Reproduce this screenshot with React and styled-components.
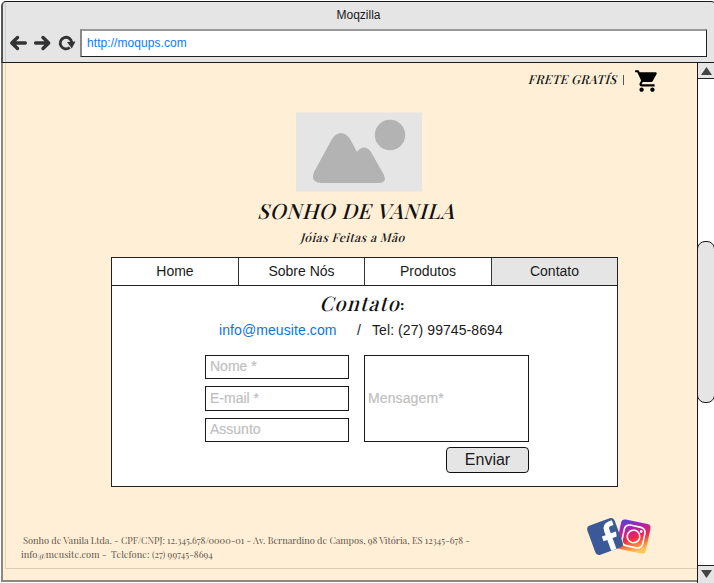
import React from "react";
import styled, { createGlobalStyle } from "styled-components";

const GlobalStyle = createGlobalStyle`
  * { box-sizing: border-box; }
  body { margin: 0; background: #fff; overflow: hidden; }
`;

const sans = `"Liberation Sans", Arial, sans-serif`;
const serif = `"Playfair Display", "Liberation Serif", serif`;

const Window = styled.div`
  position: relative;
  width: 714px;
  height: 583px;
  padding: 1px 0 0 1px;
  display: flex;
  flex-direction: column;
  overflow: hidden;
  font-family: ${sans};
  color: #1a1a1a;
`;

const Chrome = styled.header`
  height: 62px;
  flex: none;
  width: 715px;
  background: #e5e5e5;
  border: 1px solid #1a1a1a;
  border-left: 2px solid #555;
  border-radius: 5px 5px 0 0;
`;

const WindowTitle = styled.div`
  height: 27px;
  line-height: 26px;
  text-align: center;
  padding-right: 1px;
  font-size: 12px;
`;

const Toolbar = styled.div`
  display: flex;
  align-items: center;
  height: 28px;
  padding-left: 6px;
`;

const ToolIcon = styled.svg`
  width: 18px;
  height: 18px;
  margin-right: 6px;
  flex: none;
  overflow: visible;
`;

const Address = styled.div`
  width: 627px;
  height: 28px;
  flex: none;
  margin-left: -1px;
  padding-left: 5px;
  line-height: 25px;
  background: #fff;
  border: 1px solid #222;
  border-top: 2px solid #999;
  border-left: 2px solid #888;
  color: #0a7cff;
  font-size: 12px;
  letter-spacing: 0.06px;
`;

const Body = styled.div`
  display: flex;
  height: 520px;
`;

const Page = styled.main`
  width: 696px;
  flex: none;
  height: 519px;
  background: #ffefd7;
  border-left: 2px solid #8c8780;
  border-bottom: 2px solid #8c8780;
  display: flex;
  flex-direction: column;
`;

const InnerEdge = styled.div`
  position: absolute;
  left: 5px;
  top: 3px;
  width: 692px;
  height: 566px;
  border-left: 1px solid rgba(90, 70, 40, 0.16);
  border-bottom: 1px solid rgba(90, 70, 40, 0.2);
  pointer-events: none;
`;

const TopStrip = styled.div`
  display: flex;
  height: 49px;
  padding: 5px 0 0 523px;
`;

const Display = styled.span`
  font-family: ${serif};
  white-space: nowrap;
  color: #111;
  font-weight: ${(p) => p.$weight};
  font-size: ${(p) => p.$size}px;
  line-height: ${(p) => p.$line}px;
  letter-spacing: ${(p) => p.$track}px;
  transform: skewX(-16deg);
`;

const Divider = styled.span`
  width: 1px;
  height: 10px;
  margin: 7px 9px 0 8px;
  background: #555;
`;

const CartIcon = styled.svg`
  width: 26px;
  height: 26px;
  margin-left: 1px;
`;

const Hero = styled.section`
  display: flex;
  flex-direction: column;
  height: 145px;
  padding-left: 293px;
`;

const Placeholder = styled.svg`
  width: 126px;
  height: 80px;
  flex: none;
`;

const BrandLine = styled.div`
  display: flex;
  height: ${(p) => p.$height}px;
  margin-left: ${(p) => p.$shift}px;
`;

const Panel = styled.section`
  width: 507px;
  height: 230px;
  flex: none;
  margin-left: 108px;
  background: #fff;
  border: 1px solid #222;
`;

const Nav = styled.nav`
  display: grid;
  grid-template-columns: 127px 126px 127px 125px;
  height: 28px;
  border-bottom: 1px solid #222;
`;

const NavItem = styled.a`
  text-align: center;
  font-size: 14px;
  line-height: 26px;
  border-right: ${(p) => (p.$active ? "none" : "1px solid #333")};
  background: ${(p) => (p.$active ? "#e5e5e5" : "#fff")};
`;

const Heading = styled.h1`
  margin: 0;
  height: 34px;
  padding: 3px 0 0 209px;
  display: flex;
  font-weight: normal;
`;

const Colon = styled.span`
  margin-left: -2px;
  font: 700 15px/32px "Liberation Serif", serif;
`;

const ContactLine = styled.div`
  display: flex;
  height: 35px;
  padding-left: 107px;
  font-size: 14px;
  line-height: 21px;
  white-space: nowrap;
`;

const Mail = styled.a`
  width: 138px;
  color: #0a74e6;
  letter-spacing: 0.09px;
`;

const Slash = styled.span`
  width: 15px;
`;

const Phone = styled.span`
  letter-spacing: 0.08px;
`;

const Form = styled.form`
  display: grid;
  grid-template-columns: 144px 165px;
  column-gap: 15px;
  padding-left: 93px;
`;

const Fields = styled.div`
  display: flex;
  flex-direction: column;
  gap: 7px;
`;

const Field = styled.div`
  height: ${(p) => p.$height}px;
  border: 1px solid #1a1a1a;
  padding-left: 4px;
  display: flex;
  align-items: center;
  padding-bottom: 2px;
  color: #c0c0c0;
  font-size: 14px;
  -webkit-text-stroke: 0.2px currentColor;
`;

const MessageColumn = styled.div`
  display: flex;
  flex-direction: column;
  align-items: flex-end;
  gap: 5px;
`;

const Message = styled(Field)`
  width: 165px;
  padding-left: 3px;
  letter-spacing: 0.12px;
`;

const Send = styled.button`
  width: 83px;
  height: 26px;
  padding: 0 0 1px;
  border: 1px solid #111;
  border-radius: 4px;
  background: #e5e5e5;
  color: #1a1a1a;
  font: 16px ${sans};
`;

const Footer = styled.footer`
  display: flex;
  padding: 29px 0 0 18px;
`;

const Legal = styled.div`
  width: 565px;
  padding-top: 17px;
  display: flex;
  flex-direction: column;
`;

const LegalLine = styled.span`
  font-family: ${serif};
  font-size: 9.300px;
  line-height: 14px;
  white-space: pre;
  color: #5f5548;
  letter-spacing: ${(p) => p.$track}px;
  margin-left: ${(p) => p.$indent}px;
`;

const Social = styled.svg`
  width: 68px;
  height: 42px;
`;

const Scrollbar = styled.aside`
  width: 20px;
  flex: none;
  height: 520px;
  background: #fff;
  border-left: 1px solid #1a1a1a;
  display: flex;
  flex-direction: column;
`;

const ScrollButton = styled.div`
  height: ${(p) => (p.$down ? 18 : 16)}px;
  flex: none;
  background: #e5e5e5;
  border-bottom: ${(p) => (p.$down ? "none" : "1px solid #222")};
  border-top: ${(p) => (p.$down ? "1px solid #222" : "none")};
`;

const Arrow = styled.svg`
  display: block;
  width: 17px;
  height: 16px;
`;

const Thumb = styled.div`
  width: 18px;
  height: 162px;
  flex: none;
  margin: 162px 0 auto -1px;
  border: 1px solid #1a1a1a;
  border-radius: 8px;
  background: #e5e5e5;
`;

export default function App() {
  return (
    <>
      <GlobalStyle />
      <Window>
        <Chrome>
          <WindowTitle>Moqzilla</WindowTitle>
          <Toolbar>
            <ToolIcon viewBox="0 0 18 18" fill="none" stroke="#333" strokeWidth="3.400" strokeLinecap="round" strokeLinejoin="round">
              <path d="M16.300 9H3M8.500 3.500L2.800 9l5.700 5.500" />
            </ToolIcon>
            <ToolIcon viewBox="0 0 18 18" fill="none" stroke="#333" strokeWidth="3.400" strokeLinecap="round" strokeLinejoin="round">
              <path d="M2.600 9h13M10 3.500l5.700 5.500-5.700 5.500" />
            </ToolIcon>
            <ToolIcon viewBox="0 0 18 18" fill="none" stroke="#333" strokeWidth="2.800">
              <path d="M12.800 13.500A5.800 5.800 0 1 1 14.800 8.500" />
              <path d="M10 8l8.500-.5-3.700 7z" fill="#333" stroke="none" />
            </ToolIcon>
            <Address>http://moqups.com</Address>
          </Toolbar>
        </Chrome>
        <Body>
          <Page>
            <TopStrip>
              <Display $size={12.4} $line={23} $track={0.3} $weight={500}>FRETE GRATÍS</Display>
              <Divider />
              <CartIcon viewBox="0 0 24 24">
                <path d="M7 18c-1.100 0-1.990.9-1.990 2S5.900 22 7 22s2-.9 2-2-.9-2-2-2zM1 2v2h2l3.600 7.590-1.350 2.450c-.16.28-.25.61-.25.960 0 1.100.9 2 2 2h12v-2H7.420c-.14 0-.25-.11-.25-.25l.03-.12.9-1.630h7.450c.75 0 1.410-.41 1.750-1.030l3.580-6.490A1 1 0 0 0 20 4H5.210l-.94-2H1zm16 16c-1.100 0-1.990.9-1.990 2s.89 2 1.990 2 2-.9 2-2-.9-2-2-2z" />
              </CartIcon>
            </TopStrip>
            <Hero>
              <Placeholder viewBox="0 0 126 80">
                <path d="M0 .5h126v79H0z" fill="#e5e5e5" />
                <path d="M18 60L36 27c5-8 13-8 18 0l7 13c4-6 10-6 14 0l13 23q3 8-5 8H25q-11-1-7-11z" fill="#b3b3b3" />
                <circle cx="94" cy="23" r="15.200" fill="#b3b3b3" />
              </Placeholder>
              <BrandLine $height={33} $shift={-36}>
                <Display $size={21} $line={36} $track={0.8} $weight={500}>SONHO DE VANILA</Display>
              </BrandLine>
              <BrandLine $height={20} $shift={6}>
                <Display $size={12} $line={25} $track={0.5} $weight={500}>Jóias Feitas a Mão</Display>
              </BrandLine>
            </Hero>
            <Panel>
              <Nav>
                <NavItem>Home</NavItem>
                <NavItem>Sobre Nós</NavItem>
                <NavItem>Produtos</NavItem>
                <NavItem $active>Contato</NavItem>
              </Nav>
              <Heading>
                <Display $size={20} $line={28} $track={1.2} $weight={500}>Contato</Display>
                <Colon>:</Colon>
              </Heading>
              <ContactLine>
                <Mail>info@meusite.com</Mail>
                <Slash>/</Slash>
                <Phone>Tel: (27) 99745-8694</Phone>
              </ContactLine>
              <Form>
                <Fields>
                  <Field $height={24}>Nome *</Field>
                  <Field $height={25}>E-mail *</Field>
                  <Field $height={24}>Assunto</Field>
                </Fields>
                <MessageColumn>
                  <Message $height={87}>Mensagem*</Message>
                  <Send type="button">Enviar</Send>
                </MessageColumn>
              </Form>
            </Panel>
            <Footer>
              <Legal>
                <LegalLine $track={-0.035} $indent={2}>Sonho de Vanila Ltda. - CPF/CNPJ: 12.345.678/0000-01 - Av. Bernardino de Campos, 98 Vitória, ES 12345-678 -</LegalLine>
                <LegalLine $track={0.04} $indent={0}>{"info@meusite.com -  Telefone: (27) 99745-8694"}</LegalLine>
              </Legal>
              <Social viewBox="0 0 68 42">
                <defs>
                  <linearGradient id="insta" x1="0.1" y1="0" x2="0.65" y2="1">
                    <stop offset="0" stopColor="#4f42dc" />
                    <stop offset="0.3" stopColor="#b421a8" />
                    <stop offset="0.6" stopColor="#f02748" />
                    <stop offset="0.8" stopColor="#fb7a3c" />
                    <stop offset="1" stopColor="#ffc656" />
                  </linearGradient>
                </defs>
                <g transform="translate(47.500 20.500) rotate(12)">
                  <rect x="-15" y="-15" width="30" height="30" rx="4" fill="url(#insta)" />
                  <g fill="none" stroke="#fff" strokeWidth="1.600">
                    <rect x="-10.500" y="-10.500" width="21" height="21" rx="5" />
                    <circle r="6.300" />
                  </g>
                  <circle cx="6.500" cy="-6.500" r="1.400" fill="#fff" />
                </g>
                <g transform="translate(19 20.500) rotate(-20)">
                  <rect x="-14.500" y="-15.500" width="29" height="31" rx="4" fill="#3b5998" />
                  <path d="M1 15.500V4h-4v-5h4v-4q0-8 8-8h3v5h-3q-2.500 0-2.500 3v4h5.500l-1 5H6.500v11.500z" fill="#fff" />
                </g>
              </Social>
            </Footer>
          </Page>
          <Scrollbar>
            <ScrollButton>
              <Arrow viewBox="0 0 17 16"><path d="M8.500 4l5.500 8H3z" fill="#444" /></Arrow>
            </ScrollButton>
            <Thumb />
            <ScrollButton $down>
              <Arrow viewBox="0 0 17 16"><path d="M8.500 12l5.500-8H3z" fill="#444" /></Arrow>
            </ScrollButton>
          </Scrollbar>
        </Body>
        <InnerEdge />
      </Window>
    </>
  );
}
